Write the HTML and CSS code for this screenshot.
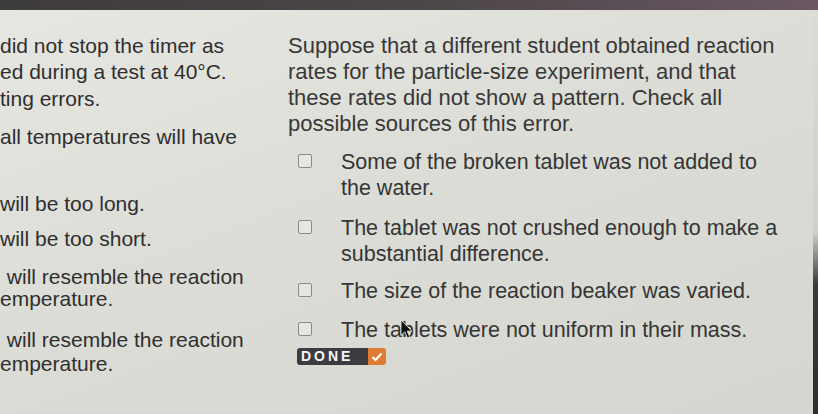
FILE: index.html
```html
<!DOCTYPE html>
<html>
<head>
<meta charset="utf-8">
<link rel="stylesheet" href="styles.css">
</head>
<body>
<div class="topbar"></div>
<div class="screen">
  <div class="left">
    <div class="l l1">did not stop the timer as</div>
    <div class="l l2">ed during a test at 40°C.</div>
    <div class="l l3">ting errors.</div>
    <div class="l l4">all temperatures will have</div>
    <div class="l l5">will be too long.</div>
    <div class="l l6">will be too short.</div>
    <div class="l l7">&nbsp;will resemble the reaction</div>
    <div class="l l8">emperature.</div>
    <div class="l l9">&nbsp;will resemble the reaction</div>
    <div class="l l10">emperature.</div>
  </div>
  <div class="right">
    <p class="prompt">Suppose that a different student obtained reaction<br>rates for the particle-size experiment, and that<br>these rates did not show a pattern. Check all<br>possible sources of this error.</p>
    <div class="opt o1"><span class="box"></span><span class="txt">Some of the broken tablet was not added to<br>the water.</span></div>
    <div class="opt o2"><span class="box"></span><span class="txt">The tablet was not crushed enough to make a<br>substantial difference.</span></div>
    <div class="opt o3"><span class="box"></span><span class="txt">The size of the reaction beaker was varied.</span></div>
    <div class="opt o4"><span class="box"></span><span class="txt">The tablets were not uniform in their mass.</span>
      <svg class="cursor" width="13" height="21" viewBox="0 0 13 21"><path d="M1 1 L1 16.5 L4.8 12.8 L7.5 19 L9.8 18 L7.2 12.2 L12 12.2 Z" fill="#111" stroke="#eeeeea" stroke-width="0.8"/></svg>
    </div>
    <div class="done"><span class="dl">DONE</span><span class="dr"><svg width="12" height="10" viewBox="0 0 12 10"><path d="M1.5 5 L4.5 8 L10.5 1.5" fill="none" stroke="#fff" stroke-width="2.2"/></svg></span></div>
  </div>
  <div class="edge"></div>
</div>
</body>
</html>
```
FILE: styles.css
```css
html, body {
  margin: 0;
  padding: 0;
}
body {
  width: 818px;
  height: 414px;
  overflow: hidden;
  background: #d8d9d2;
  font-family: "Liberation Sans", Arial, sans-serif;
  color: #333;
}
.topbar {
  height: 10px;
  background: linear-gradient(90deg, #3e3b3f 0%, #4a4548 50%, #6a5863 100%);
}
.screen {
  display: flex;
  height: 404px;
  background: linear-gradient(160deg, #e6e7e2 0%, #dcddd6 45%, #d5d6cf 100%);
}
.left {
  width: 288px;
  flex: none;
  font-size: 21px;
  line-height: 26px;
  color: #2f2f2f;
  white-space: nowrap;
  overflow: hidden;
}
.l1 { margin-top: 23px; }
.l2 { margin-top: 0; }
.l3 { margin-top: 1px; }
.l4 { margin-top: 12px; }
.l5 { margin-top: 41px; }
.l6 { margin-top: 9px; }
.l7 { margin-top: 12px; margin-left: 1px; }
.l8 { margin-top: -4px; }
.l9 { margin-top: 15px; margin-left: 1px; }
.l10 { margin-top: -2px; }
.right {
  flex: 1;
  position: relative;
}
.prompt {
  margin: 23px 0 0 0;
  font-size: 22px;
  line-height: 26px;
  color: #383838;
  white-space: nowrap;
}
.opt {
  display: flex;
  align-items: flex-start;
  font-size: 21.5px;
  line-height: 26px;
  color: #353535;
  position: relative;
  white-space: nowrap;
}
.o1 { margin-top: 12px; }
.o2 { margin-top: 14px; }
.o3 { margin-top: 11px; }
.o4 { margin-top: 13px; }
.box {
  flex: none;
  width: 12px;
  height: 12px;
  border: 1.5px solid #8a8a86;
  border-radius: 2px;
  background: #e6e6e2;
  margin: 5px 0 0 10px;
}
.txt {
  margin-left: 29px;
}
.cursor {
  position: absolute;
  left: 112px;
  top: 2px;
}
.done {
  display: flex;
  margin: 5px 0 0 9px;
  height: 17px;
  width: 89px;
  border-radius: 3px;
  overflow: hidden;
}
.dl {
  flex: 1;
  background: #3a3c42;
  color: #f4f4f4;
  font-weight: bold;
  font-size: 14px;
  letter-spacing: 3px;
  line-height: 17px;
  padding-left: 4px;
}
.dr {
  width: 18px;
  background: #e07b33;
  display: flex;
  align-items: center;
  justify-content: center;
}
.edge {
  width: 5px;
  flex: none;
  background: linear-gradient(180deg, #dcdcd5 0%, #cfd0c9 55%, #3a3a3c 68%, #2e2e30 100%);
}
```
